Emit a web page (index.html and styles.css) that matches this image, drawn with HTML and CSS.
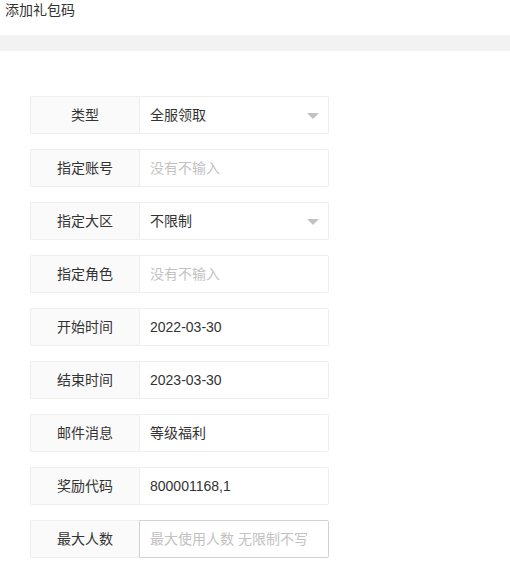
FILE: index.html
```html
<!DOCTYPE html>
<html lang="zh">
<head>
<meta charset="utf-8">
<title>添加礼包码</title>
<link rel="stylesheet" href="styles.css">
</head>
<body>
<div class="title">添加礼包码</div>
<div class="bar"></div>
<form class="form">
  <div class="row">
    <label class="label">类型</label>
    <div class="field select"><span class="value">全服领取</span><span class="arrow"></span></div>
  </div>
  <div class="row">
    <label class="label">指定账号</label>
    <div class="field"><span class="placeholder">没有不输入</span></div>
  </div>
  <div class="row">
    <label class="label">指定大区</label>
    <div class="field select"><span class="value">不限制</span><span class="arrow"></span></div>
  </div>
  <div class="row">
    <label class="label">指定角色</label>
    <div class="field"><span class="placeholder">没有不输入</span></div>
  </div>
  <div class="row">
    <label class="label">开始时间</label>
    <div class="field"><span class="value">2022-03-30</span></div>
  </div>
  <div class="row">
    <label class="label">结束时间</label>
    <div class="field"><span class="value">2023-03-30</span></div>
  </div>
  <div class="row">
    <label class="label">邮件消息</label>
    <div class="field"><span class="value">等级福利</span></div>
  </div>
  <div class="row">
    <label class="label">奖励代码</label>
    <div class="field"><span class="value">800001168,1</span></div>
  </div>
  <div class="row">
    <label class="label">最大人数</label>
    <div class="field hover"><span class="placeholder">最大使用人数 无限制不写</span></div>
  </div>
</form>
</body>
</html>
```

FILE: styles.css
```css
html, body {
  margin: 0;
  padding: 0;
  background: #fff;
}
body {
  font-family: "Liberation Sans", "Noto Sans CJK SC", sans-serif;
  font-size: 14px;
  color: #333;
}
.title {
  height: 35px;
  box-sizing: border-box;
  padding: 0 0 0 5px;
  line-height: 20px;
  color: #333;
}
.bar {
  height: 16px;
  background: #f2f2f2;
}
.form {
  margin: 45px 0 0 30px;
  display: flex;
  flex-direction: column;
  gap: 15px;
}
.row {
  display: flex;
  height: 38px;
  width: 299px;
}
.label {
  box-sizing: border-box;
  width: 109px;
  height: 38px;
  border: 1px solid #eee;
  border-right: none;
  border-radius: 2px 0 0 2px;
  background: #fafafa;
  text-align: center;
  line-height: 37px;
  color: #333;
}
.field {
  box-sizing: border-box;
  flex: 1;
  height: 38px;
  border: 1px solid #eee;
  border-radius: 0 2px 2px 0;
  background: #fff;
  padding: 1px 0 0 10px;
  line-height: 35px;
  display: flex;
  align-items: center;
  justify-content: space-between;
}
.field.hover {
  border-color: #d2d2d2;
}
.value {
  color: #333;
}
.placeholder {
  color: #c2c2c2;
}
.arrow {
  width: 0;
  height: 0;
  border-left: 6px solid transparent;
  border-right: 6px solid transparent;
  border-top: 6px solid #c2c2c2;
  margin-right: 9px;
  margin-top: 0;
}
```
